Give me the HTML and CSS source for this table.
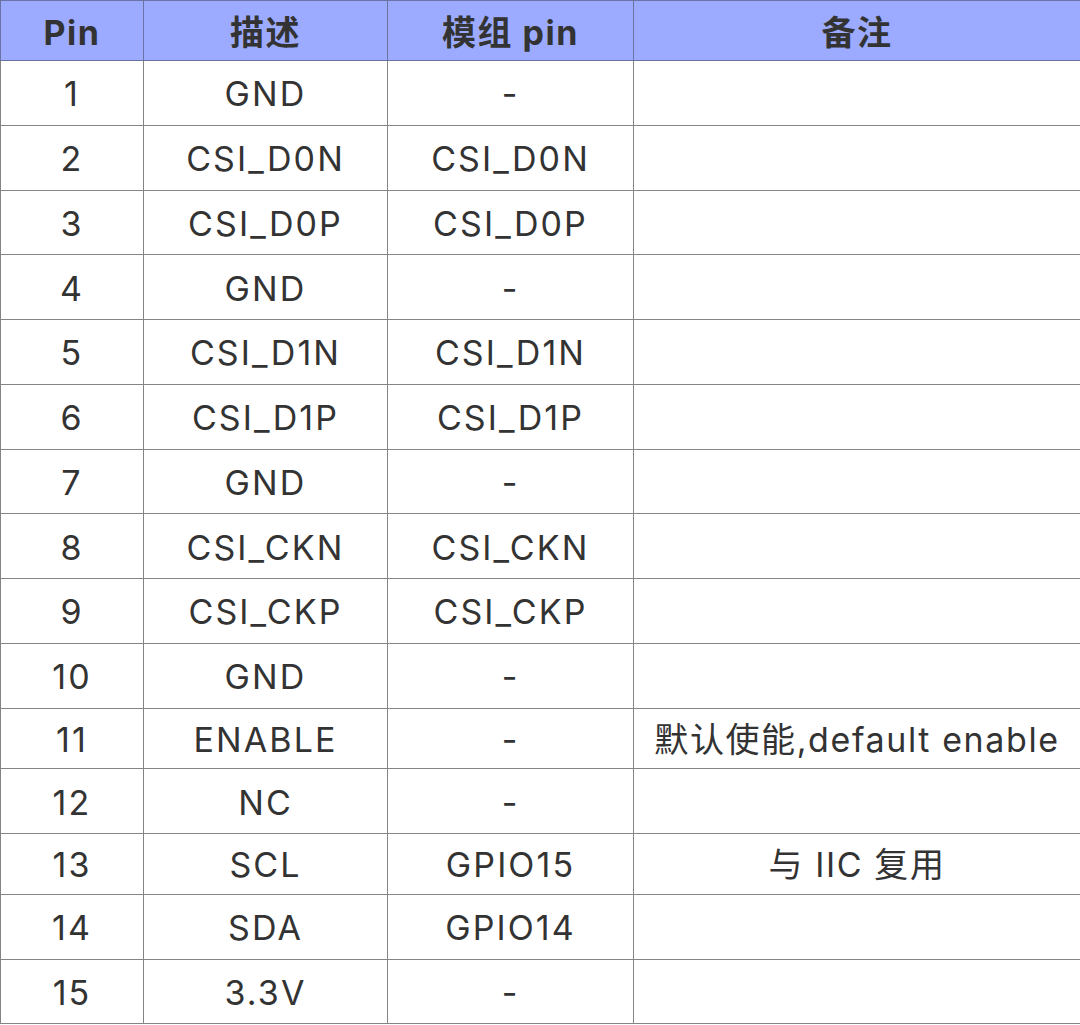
FILE: index.html
```html
<!DOCTYPE html>
<html lang="zh">
<head>
<meta charset="utf-8">
<link rel="stylesheet" href="styles.css">
</head>
<body>
<table class="pins">
  <colgroup>
    <col class="c1"><col class="c2"><col class="c3"><col class="c4">
  </colgroup>
  <thead>
    <tr class="head"><th>Pin</th><th>描述</th><th>模组 pin</th><th>备注</th></tr>
  </thead>
  <tbody>
    <tr><td>1</td><td>GND</td><td>-</td><td></td></tr>
    <tr><td>2</td><td>CSI_D0N</td><td>CSI_D0N</td><td></td></tr>
    <tr><td>3</td><td>CSI_D0P</td><td>CSI_D0P</td><td></td></tr>
    <tr><td>4</td><td>GND</td><td>-</td><td></td></tr>
    <tr><td>5</td><td>CSI_D1N</td><td>CSI_D1N</td><td></td></tr>
    <tr><td>6</td><td>CSI_D1P</td><td>CSI_D1P</td><td></td></tr>
    <tr><td>7</td><td>GND</td><td>-</td><td></td></tr>
    <tr><td>8</td><td>CSI_CKN</td><td>CSI_CKN</td><td></td></tr>
    <tr><td>9</td><td>CSI_CKP</td><td>CSI_CKP</td><td></td></tr>
    <tr><td>10</td><td>GND</td><td>-</td><td></td></tr>
    <tr class="short"><td>11</td><td>ENABLE</td><td>-</td><td class="note">默认使能,default enable</td></tr>
    <tr class="tall"><td>12</td><td>NC</td><td>-</td><td></td></tr>
    <tr class="short"><td>13</td><td>SCL</td><td>GPIO15</td><td class="note">与 IIC 复用</td></tr>
    <tr class="tall"><td>14</td><td>SDA</td><td>GPIO14</td><td></td></tr>
    <tr class="last"><td>15</td><td>3.3V</td><td>-</td><td></td></tr>
  </tbody>
</table>
</body>
</html>
```

FILE: styles.css
```css
html, body {
  margin: 0;
  padding: 0;
  background: #ffffff;
}

.pins {
  border-collapse: collapse;
  table-layout: fixed;
  width: 1080px;
  font-family: Inter, "Noto Sans CJK SC", sans-serif;
  color: #333333;
  line-height: 1;
}

.c1 { width: 143px; }
.c2 { width: 244px; }
.c3 { width: 246px; }
.c4 { width: 447px; }

.pins th,
.pins td {
  border: 1px solid #858585;
  padding: 0;
  text-align: center;
  vertical-align: middle;
  white-space: nowrap;
  overflow: visible;
}

.pins th {
  background: #9cabff;
  border-color: #6b73a3;
  font-size: 34px;
  font-weight: 700;
  letter-spacing: 1.5px;
  height: 55px;
  padding-top: 4px;
}

.pins td {
  font-size: 34px;
  letter-spacing: 2.1px;
  height: 60.75px;
  padding-top: 3px;
}

.pins tr.short td { height: 56.5px; }
.pins tr.tall td { height: 61px; }
.pins tr.last td { height: 60px; }

.pins td.note {
  letter-spacing: 1.6px;
}
```
